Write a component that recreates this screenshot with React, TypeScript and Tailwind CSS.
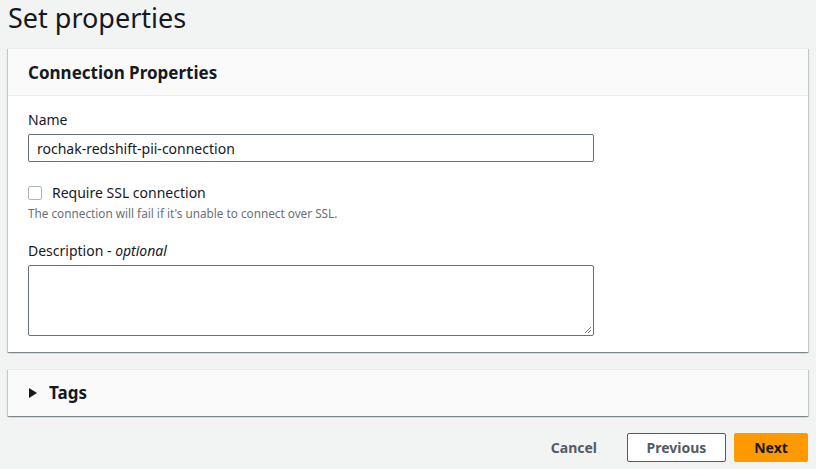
import React from 'react';

export default function App() {
  return (
    <div className="min-h-screen bg-[#f2f3f3] px-2 text-[#16191f]" style={{ fontFamily: '"Noto Sans", "Open Sans", sans-serif' }}>
      <h1 className="text-[27px] leading-[34px] pt-[1px] font-normal text-[#16191f]">Set properties</h1>

      {/* Connection properties card */}
      <div className="mt-[13px] bg-white shadow-[0_1px_1px_0_rgba(0,28,36,0.3),1px_1px_1px_0_rgba(0,28,36,0.15),-1px_1px_1px_0_rgba(0,28,36,0.15)] border-t border-[#eaeded]">
        <div className="h-[47px] bg-[#fafafa] border-b border-[#eaeded] px-5 flex items-center">
          <h2 className="text-[17px] font-bold leading-none">Connection Properties</h2>
        </div>
        <div className="px-5 pt-[14px] pb-[16px]">
          <label className="block text-[14px] leading-[20px]">Name</label>
          <div className="mt-[4px] w-[566px] h-[28px] border border-[#687078] rounded-[2px] px-2 flex items-center text-[14px]">
            rochak-redshift-pii-connection
          </div>

          <div className="mt-[21px] flex items-center gap-[10px]">
            <span className="w-[14px] h-[14px] border border-[#aab7b8] rounded-[2px] bg-white" />
            <span className="text-[14px] leading-[20px]">Require SSL connection</span>
          </div>
          <p className="mt-[1px] text-[11.75px] leading-[18px] text-[#687078]">The connection will fail if it's unable to connect over SSL.</p>

          <label className="mt-[19px] block text-[14px] leading-[20px]">
            Description - <i>optional</i>
          </label>
          <div className="relative mt-[4px] w-[566px] h-[71px] border border-[#687078] rounded-[2px]">
            <svg className="absolute right-[1px] bottom-[1px]" width="9" height="9" viewBox="0 0 9 9">
              <path d="M8 2 L2 8 M8 5 L5 8" stroke="#777" strokeWidth="1" />
            </svg>
          </div>
        </div>
      </div>

      {/* Tags */}
      <div className="mt-[17px] h-[47px] bg-[#fafafa] border-t border-[#eaeded] shadow-[0_1px_1px_0_rgba(0,28,36,0.3),1px_1px_1px_0_rgba(0,28,36,0.15),-1px_1px_1px_0_rgba(0,28,36,0.15)] flex items-center pl-[21px] gap-[11px]">
        <svg width="9" height="10" viewBox="0 0 9 10">
          <path d="M0 0 L8 5 L0 10 Z" fill="#16191f" />
        </svg>
        <span className="text-[17px] font-bold">Tags</span>
      </div>

      {/* Footer actions */}
      <div className="mt-[17px] flex items-center justify-end">
        <button className="text-[14px] font-bold text-[#545b64] px-5">Cancel</button>
        <button className="ml-[10px] w-[99px] h-[29px] border border-[#545b64] rounded-[2px] bg-white text-[14px] font-bold text-[#545b64]">Previous</button>
        <button className="ml-[8px] w-[74px] h-[29px] rounded-[2px] text-[14px] font-bold text-[#16191f] bg-[#ff9900]">Next</button>
      </div>
    </div>
  );
}
